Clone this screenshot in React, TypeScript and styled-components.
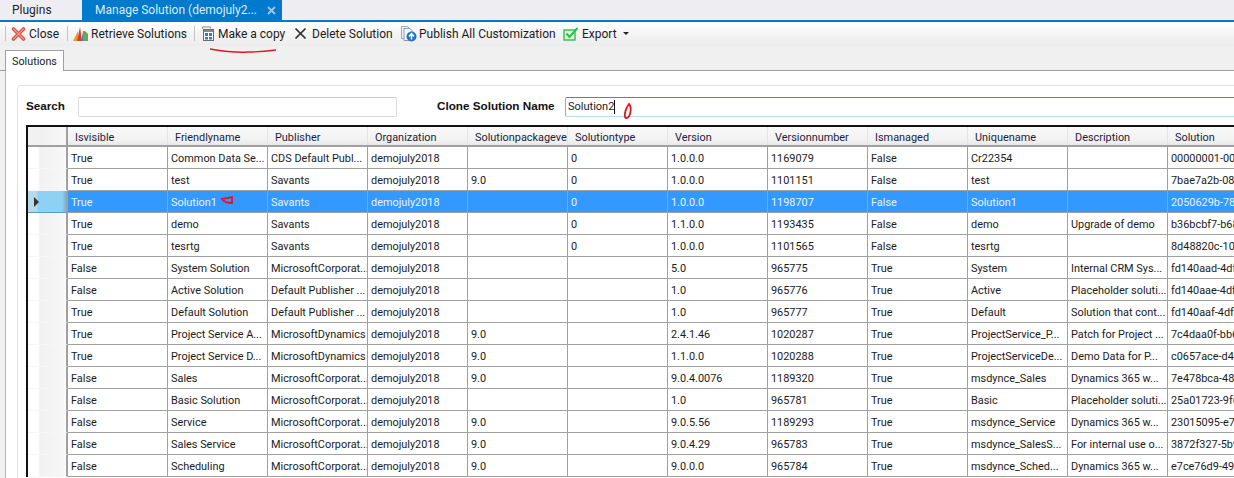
import React from "react";
import styled, { createGlobalStyle } from "styled-components";

const Global = createGlobalStyle`
  html, body { margin: 0; padding: 0; background: #fff; }
  body { width: 1234px; height: 478px; overflow: hidden; font-family: Roboto, "Liberation Sans", sans-serif; }
  #root { width: 1234px; height: 478px; overflow: hidden; }
`;

const Page = styled.div`
  position: relative;
  width: 1234px;
  height: 478px;
  overflow: hidden;
  display: flex;
  flex-direction: column;
  font-size: 11px;
  color: #1a1a1a;
`;

const DocTabs = styled.div`
  height: 20px;
  flex: none;
  display: flex;
  background: #eeeef2;
  border-bottom: 2px solid #007acc;
`;
const DocTab = styled.div<{ $active?: boolean }>`
  display: flex;
  align-items: center;
  justify-content: space-between;
  box-sizing: border-box;
  font-size: 12px;
  height: 20px;
  padding-left: ${(p) => (p.$active ? "13px" : "12px")};
  padding-right: ${(p) => (p.$active ? "6px" : "0")};
  width: ${(p) => (p.$active ? "200px" : "82px")};
  background: ${(p) => (p.$active ? "#007acc" : "transparent")};
  color: ${(p) => (p.$active ? "#dcecf8" : "#1e1e1e")};
`;
const CloseMark = styled.span`
  color: #9cc9ea;
  display: flex;
`;

const Toolbar = styled.div`
  height: 24px;
  flex: none;
  box-sizing: border-box;
  display: flex;
  align-items: center;
  padding: 0 0 1px 5px;
  background: linear-gradient(#ffffff, #f4f4f4 50%, #ececec);
  svg { flex: none; }
`;
const ToolButton = styled.div<{ $w: number; $gap?: number; $ml?: number }>`
  display: flex;
  flex: none;
  width: ${(p) => p.$w}px;
  align-items: center;
  gap: ${(p) => p.$gap ?? 3}px;
  margin-left: ${(p) => p.$ml ?? 0}px;
  font-size: 12px;
  color: #1c1c1c;
  white-space: nowrap;
`;
const ToolSep = styled.div<{ $ml: number }>`
  width: 1px;
  height: 15px;
  flex: none;
  background: #c4c4c4;
  margin-left: ${(p) => p.$ml}px;
`;
const Caret = styled.span`
  width: 0;
  height: 0;
  margin-left: 3px;
  border-left: 3px solid transparent;
  border-right: 3px solid transparent;
  border-top: 3px solid #222;
`;

const TabStrip = styled.div`
  height: 25px;
  flex: none;
  box-sizing: border-box;
  display: flex;
  align-items: flex-end;
  padding-left: 5px;
  background: #f0f0f0;
  border-bottom: 1px solid #a0a0a0;
`;
const PageTab = styled.div`
  box-sizing: border-box;
  width: 59px;
  height: 21px;
  margin-bottom: -1px;
  display: flex;
  align-items: center;
  justify-content: center;
  background: #fff;
  border: 1px solid #a0a0a0;
  border-bottom: none;
  font-size: 10.75px;
`;

const Body = styled.div`
  flex: 1;
  min-height: 0;
  display: flex;
  background: #f0f0f0;
  padding-left: 5px;
`;
const TabPanel = styled.div`
  flex: 1;
  min-width: 0;
  background: #fff;
  border-left: 1px solid #b5b5b5;
  padding: 14px 0 0 11px;
`;
const Group = styled.div`
  box-sizing: border-box;
  width: 1300px;
  height: 500px;
  border: 1px solid #dce0e8;
  border-radius: 4px;
  padding: 11px 0 0 8px;
`;
const FormRow = styled.div`
  display: flex;
  height: 28px;
  align-items: flex-start;
`;
const Label = styled.div<{ $w: number; $ml?: number }>`
  width: ${(p) => p.$w}px;
  flex: none;
  margin-left: ${(p) => p.$ml ?? 0}px;
  font-family: "Liberation Sans", sans-serif;
  font-weight: 700;
  font-size: 11.7px;
  line-height: 18px;
  color: #111;
  white-space: nowrap;
`;
const Field = styled.div<{ $w: number; $focus?: boolean }>`
  box-sizing: border-box;
  width: ${(p) => p.$w}px;
  height: 20px;
  flex: none;
  border: 1px solid #dcdcdc;
  border-color: ${(p) => (p.$focus ? "#7eb4d4 #7eb4d4 #b6dcee" : "#dcdcdc")};
  border-top-color: ${(p) => (p.$focus ? "#4f86ad" : "#c9c9c9")};
  border-radius: 2px;
  padding-left: 2px;
  font-size: 11px;
  line-height: 18px;
  display: flex;
  align-items: center;
`;
const Cursor = styled.span`
  display: inline-block;
  width: 1px;
  height: 14px;
  background: #111;
`;

const Grid = styled.div`
  width: 1300px;
  border-top: 2px solid #111;
  border-left: 2px solid #111;
  background: #fff;
`;
const HeaderRow = styled.div`
  display: flex;
  height: 18px;
  background: linear-gradient(#f8f8f8, #f3f3f3 70%, #e8e8e8);
  border-bottom: 2px solid #a0a0a0;
`;
const Corner = styled.div`
  width: 40px;
  flex: none;
  box-sizing: border-box;
  border-right: 2px solid #a0a0a0;
  background: linear-gradient(90deg, #f1f1f1 40%, #f7f7f7);
`;
const HeadCell = styled.div`
  width: 100px;
  flex: none;
  box-sizing: border-box;
  padding: 1px 0 0 7px;
  border-right: 1px solid #e4e4e4;
  font-size: 10.9px;
  line-height: 19px;
  color: #1c1c3c;
  white-space: nowrap;
  overflow: hidden;
`;
const Row = styled.div<{ $sel?: boolean }>`
  display: flex;
  height: 22px;
  box-sizing: border-box;
  border-bottom: 1px solid #a0a0a0;
  background: ${(p) => (p.$sel ? "#3399ff" : "#fff")};
  color: ${(p) => (p.$sel ? "#e8f3ff" : "#1a1a1a")};
`;
const RowHead = styled.div<{ $sel?: boolean }>`
  width: 40px;
  flex: none;
  box-sizing: border-box;
  margin-bottom: -1px;
  border-right: 2px solid #a0a0a0;
  display: flex;
  align-items: center;
  padding-left: 6px;
  background: ${(p) =>
    p.$sel
      ? "linear-gradient(90deg,#b7d9ea 0,#b7d9ea 9px,#8fd0f5 10px,#8fd0f5 34px,#6fb2dc 38px)"
      : "linear-gradient(90deg,#fff 0,#fff 10px,#f1f1f1 12px,#f7f7f7 36px,#fff 38px)"};
  border-bottom: 1px solid ${(p) => (p.$sel ? "#5a9cc4" : "#f6f6f6")};
`;
const Arrow = styled.span`
  width: 0;
  height: 0;
  border-top: 5px solid transparent;
  border-bottom: 5px solid transparent;
  border-left: 5px solid #333;
`;
const Cell = styled.div`
  width: 100px;
  flex: none;
  box-sizing: border-box;
  padding: 2px 0 0 3px;
  border-right: 1px solid #a0a0a0;
  font-size: 10.9px;
  line-height: 19px;
  white-space: nowrap;
  overflow: hidden;
`;

const Overlay = styled.svg`
  position: absolute;
  left: 0;
  top: 0;
  pointer-events: none;
`;

const heads = ["Isvisible","Friendlyname","Publisher","Organization","Solutionpackageve","Solutiontype","Version","Versionnumber","Ismanaged","Uniquename","Description","Solution"];
const org = "demojuly2018";
const MC = "MicrosoftCorporat...";
const rows: string[][] = [
  ["True","Common Data Se...","CDS Default Publ...",org,"","0","1.0.0.0","1169079","False","Cr22354","","00000001-00"],
  ["True","test","Savants",org,"9.0","0","1.0.0.0","1101151","False","test","","7bae7a2b-08"],
  ["True","Solution1","Savants",org,"","0","1.0.0.0","1198707","False","Solution1","","2050629b-78"],
  ["True","demo","Savants",org,"","0","1.1.0.0","1193435","False","demo","Upgrade of demo","b36bcbf7-b68"],
  ["True","tesrtg","Savants",org,"","0","1.0.0.0","1101565","False","tesrtg","","8d48820c-10"],
  ["False","System Solution",MC,org,"","","5.0","965775","True","System","Internal CRM Sys...","fd140aad-4df"],
  ["False","Active Solution","Default Publisher ...",org,"","","1.0","965776","True","Active","Placeholder soluti...","fd140aae-4df"],
  ["True","Default Solution","Default Publisher ...",org,"","","1.0","965777","True","Default","Solution that cont...","fd140aaf-4df"],
  ["True","Project Service A...","MicrosoftDynamics",org,"9.0","","2.4.1.46","1020287","True","ProjectService_P...","Patch for Project ...","7c4daa0f-bb6"],
  ["True","Project Service D...","MicrosoftDynamics",org,"9.0","","1.1.0.0","1020288","True","ProjectServiceDe...","Demo Data for P...","c0657ace-d4"],
  ["False","Sales",MC,org,"9.0","","9.0.4.0076","1189320","True","msdynce_Sales","Dynamics 365 w...","7e478bca-48"],
  ["False","Basic Solution",MC,org,"","","1.0","965781","True","Basic","Placeholder soluti...","25a01723-9f6"],
  ["False","Service",MC,org,"9.0","","9.0.5.56","1189293","True","msdynce_Service","Dynamics 365 w...","23015095-e7"],
  ["False","Sales Service",MC,org,"9.0","","9.0.4.29","965783","True","msdynce_SalesS...","For internal use o...","3872f327-5b9"],
  ["False","Scheduling",MC,org,"9.0","","9.0.0.0","965784","True","msdynce_Sched...","Dynamics 365 w...","e7ce76d9-49"],
];

const CloseIcon = () => (
  <svg width="15" height="16" viewBox="0 0 15 16">
    <path d="M2.5 3l10 10M12.5 3l-10 10" stroke="#d9534a" strokeWidth="3.6" strokeLinecap="round" />
    <path d="M2.5 3l10 10M12.5 3l-10 10" stroke="#f0958a" strokeWidth="1.1" strokeLinecap="round" />
  </svg>
);
const ChartIcon = () => (
  <svg width="17" height="16" viewBox="0 0 17 16">
    <path d="M1 15L6 5v10z" fill="#e8a020" />
    <path d="M5 15L8 1l2 14z" fill="#d6402a" />
    <path d="M9 15l2-9 1 9z" fill="#3f7fc4" />
    <path d="M11 15V5h2l3 3v7z" fill="#6aa84f" />
  </svg>
);
const CopyIcon = () => (
  <svg width="14" height="16" viewBox="0 0 14 16">
    <path d="M1.5 3V1h8v1.5" fill="none" stroke="#8a8a8a" />
    <rect x="2.5" y="3.5" width="10" height="11" fill="#fff" stroke="#6a6a6a" />
    <rect x="3" y="4" width="9" height="2" fill="#8a8a8a" />
    <rect x="4" y="7" width="3" height="3" fill="#3d78b8" />
    <rect x="8" y="7" width="3" height="3" fill="#3d78b8" />
    <rect x="4" y="11" width="3" height="2.5" fill="#3d78b8" />
    <rect x="8" y="11" width="3" height="2.5" fill="#3d78b8" />
  </svg>
);
const DeleteIcon = () => (
  <svg width="13" height="13" viewBox="0 0 13 13">
    <path d="M1.5 1.5l10 10M11.5 1.5l-10 10" stroke="#2e2e2e" strokeWidth="1.7" />
  </svg>
);
const PublishIcon = () => (
  <svg width="17" height="17" viewBox="0 0 17 17">
    <path d="M1.5 1.5h6l2 2v10h-8z" fill="#eef2f8" stroke="#9aa8bc" />
    <path d="M4 3.5h6l2 2v10H4z" fill="#f6f8fc" stroke="#8a9ab2" />
    <circle cx="11.5" cy="11.5" r="5" fill="#1f74c4" />
    <path d="M11.5 14.5v-5M9 11.5l2.5-3 2.5 3" fill="none" stroke="#fff" strokeWidth="1.5" />
  </svg>
);
const ExportIcon = () => (
  <svg width="16" height="14" viewBox="0 0 16 14">
    <rect x="1" y="3" width="11" height="10" fill="#dff5df" stroke="#34c04a" strokeWidth="1.4" />
    <path d="M3.5 6.5l3 3.5L14.5 1" fill="none" stroke="#2fbf46" strokeWidth="2" />
  </svg>
);

export default function App() {
  return (
    <Page>
      <Global />
      <DocTabs>
        <DocTab>Plugins</DocTab>
        <DocTab $active>
          <span>Manage Solution (demojuly2...</span>
          <CloseMark>
            <svg width="9" height="9" viewBox="0 0 9 9">
              <path d="M1 1l7 7M8 1L1 8" stroke="currentColor" strokeWidth="1.8" />
            </svg>
          </CloseMark>
        </DocTab>
      </DocTabs>
      <Toolbar>
        <ToolSep $ml={0} />
        <ToolButton $w={48} $ml={5} $gap={3}><CloseIcon />Close</ToolButton>
        <ToolSep $ml={8} />
        <ToolButton $w={113} $ml={4} $gap={2}><ChartIcon />Retrieve Solutions</ToolButton>
        <ToolSep $ml={9} />
        <ToolButton $w={85} $ml={6} $gap={3}><CopyIcon />Make a copy</ToolButton>
        <ToolButton $w={98} $ml={8} $gap={5}><DeleteIcon />Delete Solution</ToolButton>
        <ToolButton $w={155} $ml={8} $gap={2}><PublishIcon />Publish All Customization</ToolButton>
        <ToolButton $w={65} $ml={8} $gap={3}><ExportIcon />Export<Caret /></ToolButton>
      </Toolbar>
      <TabStrip>
        <PageTab>Solutions</PageTab>
      </TabStrip>
      <Body>
        <TabPanel>
          <Group>
            <FormRow>
              <Label $w={52}>Search</Label>
              <Field $w={319} />
              <Label $w={128} $ml={40}>Clone Solution Name</Label>
              <Field $w={700} $focus>Solution2<Cursor /></Field>
            </FormRow>
            <Grid>
              <HeaderRow>
                <Corner />
                {heads.map((h) => <HeadCell key={h}>{h}</HeadCell>)}
              </HeaderRow>
              {rows.map((r, i) => (
                <Row key={i} $sel={i === 2}>
                  <RowHead $sel={i === 2}>{i === 2 && <Arrow />}</RowHead>
                  {r.map((c, j) => <Cell key={j}>{c}</Cell>)}
                </Row>
              ))}
            </Grid>
          </Group>
        </TabPanel>
      </Body>
      <Overlay width="1234" height="478" viewBox="0 0 1234 478">
        <path d="M210 49c12 2 24 4 38 3 10 0 20-1 28-2" fill="none" stroke="#e8141c" strokeWidth="1.4" />
        <path d="M629 104c-3 4-5 10-4 13 1 2 4 1 5-3 1-4 1-8-1-10z" fill="none" stroke="#e8141c" strokeWidth="1.8" />
        <path d="M222 199l10-2v6c-4 0-8-1-10-4z" fill="none" stroke="#e8141c" strokeWidth="1.8" />
      </Overlay>
    </Page>
  );
}
